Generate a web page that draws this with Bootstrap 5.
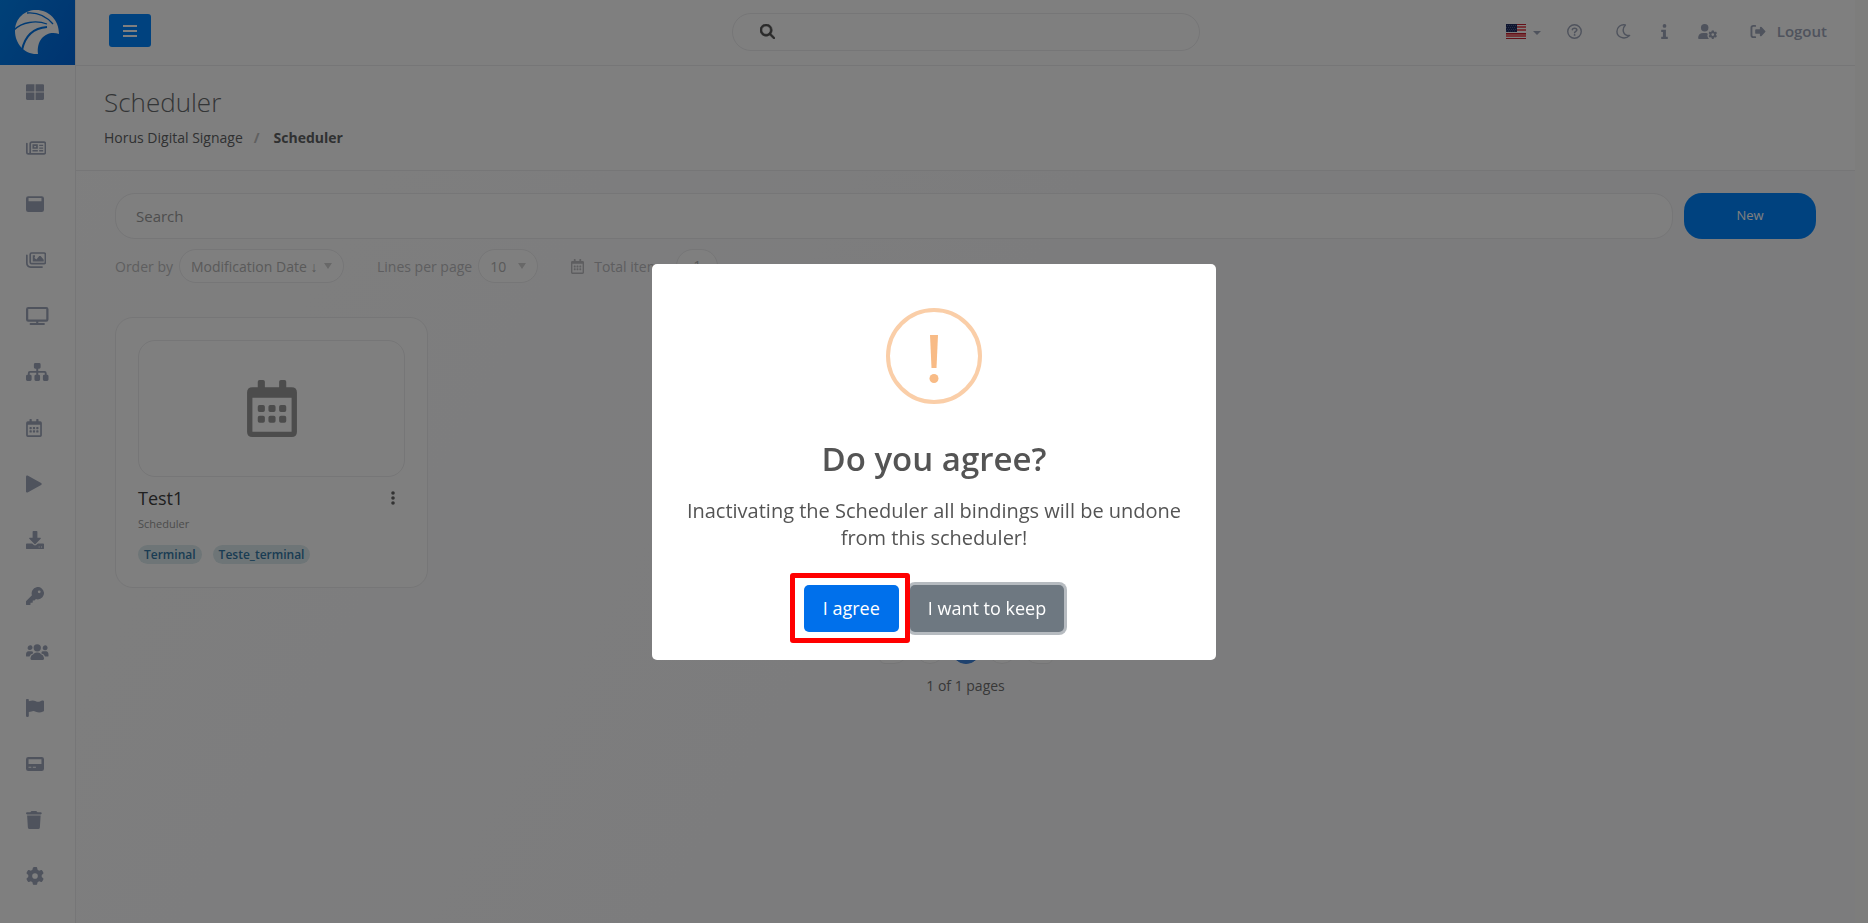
<!DOCTYPE html>
<html lang="en">
<head>
<meta charset="utf-8">
<meta name="viewport" content="width=device-width, initial-scale=1">
<title>Scheduler - Horus Digital Signage</title>
<link rel="stylesheet" href="https://cdn.jsdelivr.net/npm/bootstrap@5.3.0/dist/css/bootstrap.min.css">
<style>
  :root { --line: #ececee; --muted: #9ea6ba; --ink: #707070; --brand: #0085ff; }
  body { font-family: "Open Sans", "Noto Sans", sans-serif; font-size: 14px; background: #fafaf8; color: var(--ink); }
  a { text-decoration: none; color: inherit; }
  svg { fill: currentColor; display: block; flex: none; }
  .shell { background: linear-gradient(120deg, #fefefe, #f9f9fb 50%); margin-right: 13px; }
  .side { width: 76px; background: #fff; border-right: 1px solid var(--line); color: var(--muted); }
  .brand-box { height: 65px; background: linear-gradient(120deg, #0082f0, #0068e0); color: #fff; }
  .side .nav-link { height: 56px; padding: 0 0 2px 26px; display: flex; align-items: center; color: inherit; }
  .side .nav-link svg { height: 18px; }
  .topbar { height: 66px; background: #fff; border-bottom: 1px solid var(--line); color: var(--muted); padding: 0 28px 2px; }
  .topbar > * { flex: 1 1 0; }
  .topbar .find { flex: 0 0 468px; position: relative; }
  .find input { height: 38px; border: 1px solid var(--line); border-radius: 19px; padding-left: 50px; }
  .find svg { position: absolute; left: 28px; top: 11px; color: #555; }
  .menu-btn { background: var(--brand); color: #fff; width: 42px; height: 33px; border-radius: 3px; padding: 0; margin: 0 0 2px 5px; }
  .tools { gap: 26px; font-size: 15px; font-weight: 600; }
  .tools svg { height: 15px; }
  .lang { gap: 7px; }
  .logout { padding-left: 7px; gap: 11px; }
  .heading { background: #fff; border-bottom: 1px solid var(--line); height: 105px; padding: 16px 28px; }
  .heading h1 { font-size: 26px; font-weight: 300; line-height: 40px; margin: 0; color: #676a6c; }
  .crumbs { font-size: 14px; line-height: 20px; margin: 6px 0 0; color: #606264; }
  .crumbs .breadcrumb-item + .breadcrumb-item { padding-left: 11px; }
  .crumbs .breadcrumb-item + .breadcrumb-item::before { padding-right: 14px; color: #c0c0c0; }
  .work { padding: 22px 39px; }
  .search-box { height: 46px; border: 1px solid var(--line); border-radius: 20px; font-size: 15px; padding: 0 20px; }
  .search-box::placeholder { color: #9c9c9c; }
  .new-btn { width: 132px; height: 46px; border-radius: 18px; background: var(--brand); color: #fff; font-size: 13px; }
  .filters { margin-top: 10px; color: #bcbcc0; gap: 33px; }
  .filters > div { gap: 6px; }
  .pill { height: 34px; border: 1px solid var(--line); border-radius: 17px; background-color: #fff; color: #b4b4b4; }
  select.pill { appearance: none; width: 165px; padding: 0 11px; background-repeat: no-repeat; background-position: right 11px center;
    background-image: url("data:image/svg+xml,%3Csvg xmlns='http://www.w3.org/2000/svg' width='8' height='6'%3E%3Cpath fill='%23d0d0d0' d='M0 0h8L4 6z'/%3E%3C/svg%3E"); }
  select.short { width: 60px; }
  .count { width: 42px; line-height: 32px; text-align: center; }
  .tiles { --bs-gutter-x: 34px; margin-top: 34px; }
  .tile { border: 1px solid var(--line); border-radius: 18px; background: #fff; padding: 22px; height: 271px; }
  .thumb { height: 137px; border: 1px solid var(--line); border-radius: 17px; color: #989898; }
  .tile h2 { font-size: 18px; line-height: 24px; font-weight: 500; color: #404040; margin: 0; }
  .tile .kind { font-size: 11px; line-height: 16px; color: #999; margin: 6px 0 13px; }
  .tag { background: #dcebee; color: #3478a6; font-size: 12px; font-weight: 600; line-height: 19px; border-radius: 10px; padding: 0 6px; }
  .dots { color: #666; width: 18px; height: 18px; padding: 0; }
  .tile-head { margin-top: 9px; padding-right: 3px; }
  .pager { gap: 7px; margin: 42px 0 0; }
  .pager .page-link { min-width: 30px; height: 34px; border: 1px solid var(--line); border-radius: 15px; padding: 0 9px; line-height: 32px; text-align: center; color: #999; }
  .pager .active .page-link { background: #3f84dc; border-color: #3f84dc; color: #fff; }
  .page-note { margin-top: 12px; line-height: 20px; }
  .ask { --bs-modal-width: 564px; }
  .ask .modal-content { border: 0; border-radius: 5px; color: #545454; text-align: center; padding: 44px 24px 28px; }
  .warn { width: 96px; height: 96px; margin: 0 auto; }
  .ask h2 { font-size: 33px; line-height: 44px; font-weight: 600; margin: 33px 0 16px; }
  .ask p { font-size: 20px; line-height: 27px; margin: 0 0 34px; }
  .ask .btn { font-size: 18px; height: 47px; padding: 0 19px; border: 0; border-radius: 5px; color: #fff; }
  .yes { background: #0070eb; }
  .keep { background: #6e7881; box-shadow: 0 0 0 3px #b6bbc0; }
  .ask .keep { padding: 0 18px; }
  .marked { position: relative; z-index: 1; }
  .marked::after { content: ""; position: absolute; inset: -12px -11px -11px -14px; border: 5px solid #f00; border-radius: 3px; pointer-events: none; }
</style>
</head>
<body>
<svg width="0" height="0" class="position-absolute" aria-hidden="true">
  <symbol id="gear" viewBox="0 0 512 512"><path d="M495.900 166.600c3.200 8.700 .5 18.400-6.400 24.600l-43.300 39.400c1.100 8.300 1.700 16.800 1.700 25.400s-.6 17.100-1.700 25.400l43.300 39.400c6.900 6.200 9.600 15.900 6.400 24.600c-4.400 11.900-9.700 23.300-15.800 34.300l-4.700 8.100c-6.600 11-14 21.400-22.100 31.200c-5.900 7.200-15.700 9.600-24.500 6.800l-55.700-17.700c-13.400 10.300-28.200 18.900-44 25.400l-12.500 57.100c-2 9.100-9 16.300-18.200 17.800c-13.800 2.300-28 3.500-42.500 3.500s-28.700-1.200-42.500-3.500c-9.200-1.500-16.200-8.700-18.200-17.800l-12.500-57.100c-15.800-6.500-30.600-15.100-44-25.400L83.100 425.900c-8.800 2.800-18.600 .3-24.500-6.800c-8.100-9.800-15.500-20.200-22.100-31.200l-4.700-8.100c-6.100-11-11.400-22.400-15.800-34.300c-3.200-8.700-.5-18.400 6.400-24.600l43.300-39.400C64.600 273.100 64 264.600 64 256s.6-17.100 1.700-25.400L22.400 191.200c-6.900-6.200-9.600-15.900-6.400-24.600c4.400-11.900 9.700-23.300 15.800-34.300l4.700-8.100c6.600-11 14-21.400 22.100-31.200c5.900-7.200 15.700-9.600 24.500-6.800l55.700 17.700c13.400-10.300 28.200-18.900 44-25.400l12.500-57.100c2-9.100 9-16.300 18.200-17.800C227.300 1.200 241.500 0 256 0s28.700 1.200 42.500 3.500c9.200 1.500 16.200 8.700 18.200 17.800l12.500 57.100c15.800 6.500 30.600 15.100 44 25.400l55.700-17.700c8.800-2.800 18.600-.3 24.500 6.800c8.100 9.800 15.500 20.200 22.100 31.200l4.700 8.100c6.100 11 11.400 22.400 15.800 34.300zM256 336a80 80 0 1 0 0-160 80 80 0 1 0 0 160z"/></symbol>
  <symbol id="calendar" viewBox="0 0 448 512"><path fill-rule="evenodd" d="M96 16q0-16 16-16h32q16 0 16 16v48h128V16q0-16 16-16h32q16 0 16 16v48h48q48 0 48 48v352q0 48-48 48H48q-48 0-48-48V112q0-48 48-48h48zM48 160v304h352V160zM96 240q0-16 16-16h32q16 0 16 16v32q0 16-16 16h-32q-16 0-16-16zm96 0q0-16 16-16h32q16 0 16 16v32q0 16-16 16h-32q-16 0-16-16zm96 0q0-16 16-16h32q16 0 16 16v32q0 16-16 16h-32q-16 0-16-16zM96 336q0-16 16-16h32q16 0 16 16v32q0 16-16 16h-32q-16 0-16-16zm96 0q0-16 16-16h32q16 0 16 16v32q0 16-16 16h-32q-16 0-16-16zm96 0q0-16 16-16h32q16 0 16 16v32q0 16-16 16h-32q-16 0-16-16z"/></symbol>
</svg>

<div class="shell d-flex min-vh-100">
  <aside class="side flex-shrink-0">
    <a href="#" class="brand-box d-block" aria-label="Horus">
      <svg width="75" height="65" viewBox="0 0 75 65"><path d="M15 31C15 18 25 10 36 10C49 10 59 20 59 34C48 30 36 38 38 54C25 55 15 44 15 31Z"/><g fill="none" stroke="#0075e8"><path stroke-width="1.300" d="M14 30C22 22 36 20 47 24M27 13C38 12 46 16 53 24"/><path stroke-width="2" d="M22 50C25 36 33 28 47 27"/></g></svg>
    </a>
    <nav class="nav flex-column" aria-label="Main">
      <a class="nav-link" href="#" aria-label="Dashboard"><svg viewBox="0 0 512 512"><path d="M0 64q0-32 32-32h208v208H0zM272 32h208q32 0 32 32v176H272zM0 272h240v208H32q-32 0-32-32zM272 272h240v176q0 32-32 32H272z"/></svg></a>
      <a class="nav-link" href="#" aria-label="News"><svg viewBox="0 0 576 512"><path fill-rule="evenodd" d="M168 64h336q72 0 72 72v240q0 72-72 72H72q-72 0-72-72V128q0-24 24-24t24 24v248q0 24 24 24t24-24V136q0-72 72-72zm-24 312q0 14-4 24h364q24 0 24-24V136q0-24-24-24H168q-24 0-24 24zM184 152h152v128H184zm48 44v40h56v-40zM376 160h112v40H376zM376 240h112v40H376zM184 316h152v40H184zM376 316h112v40H376z"/></svg></a>
      <a class="nav-link" href="#" aria-label="Templates"><svg viewBox="0 0 512 512"><path fill-rule="evenodd" d="M64 32h384q64 0 64 64v320q0 64-64 64H64q-64 0-64-64V96q0-64 64-64zm8 56v88h368V88z"/></svg></a>
      <a class="nav-link" href="#" aria-label="Media"><svg viewBox="0 0 576 512"><path fill-rule="evenodd" d="M160 32h352q64 0 64 64v224q0 64-64 64H160q-64 0-64-64V96q0-64 64-64zm0 48q-16 0-16 16v224q0 16 16 16h352q16 0 16-16V96q0-16-16-16zM24 96q24 0 24 24v224q0 88 88 88h320q24 0 24 24t-24 24H136Q0 480 0 344V120q0-24 24-24zM192 120h64v64h-32l72 56 80-100h40l88 112v44H192z"/></svg></a>
      <a class="nav-link" href="#" aria-label="Terminals"><svg viewBox="0 0 640 512"><path fill-rule="evenodd" d="M64 0h512q64 0 64 64v288q0 64-64 64H350v40h160q28 0 28 28t-28 28H130q-28 0-28-28t28-28h160v-40H64q-64 0-64-64V64Q0 0 64 0zm0 58v300h512V58z"/></svg></a>
      <a class="nav-link" href="#" aria-label="Groups"><svg viewBox="0 0 640 512"><path d="M264 0h112q40 0 40 40v80q0 40-40 40h-28v68h180q60 0 60 60v48h12q40 0 40 40v96q0 40-40 40h-80q-40 0-40-40v-96q0-40 40-40h14v-48q0-10-10-10H348v58h12q40 0 40 40v96q0 40-40 40h-80q-40 0-40-40v-96q0-40 40-40h12v-58H116q-10 0-10 10v48h14q40 0 40 40v96q0 40-40 40H40q-40 0-40-40v-96q0-40 40-40h12v-48q0-60 60-60h180v-68h-28q-40 0-40-40V40q0-40 40-40z"/></svg></a>
      <a class="nav-link" href="#" aria-label="Scheduler"><svg width="16" height="18"><use href="#calendar"/></svg></a>
      <a class="nav-link" href="#" aria-label="Player"><svg viewBox="0 0 448 512"><path d="M0 50Q0 0 45 14l385 215q36 28 0 54L45 498Q0 512 0 462z"/></svg></a>
      <a class="nav-link" href="#" aria-label="Downloads"><svg viewBox="0 0 512 512"><path fill-rule="evenodd" d="M188 24q0-24 24-24h88q24 0 24 24v168h82q28 4 12 28L272 370q-16 14-32 0L94 220q-16-24 12-28h82zM0 376q0-24 24-24h150l50 48q32 24 64 0l50-48h150q24 0 24 24v112q0 24-24 24H24q-24 0-24-24zm360 66v30h28v-30zm68 0v30h28v-30z"/></svg></a>
      <a class="nav-link" href="#" aria-label="Licenses"><svg viewBox="0 0 512 512"><path fill-rule="evenodd" d="M336 352a176 176 0 1 0-167-120L7 395q-7 7-7 17v76q0 24 24 24h80q24 0 24-24v-40h40q24 0 24-24v-40h40q10 0 17-7l33-33q26 8 54 8zM376 96a40 40 0 1 1 0 80 40 40 0 1 1 0-80z"/></svg></a>
      <a class="nav-link" href="#" aria-label="Users"><svg viewBox="0 0 640 512"><path d="M144 64a72 72 0 1 1-96 96 80 80 0 0 1 96-96zM320 32a104 104 0 1 1 0 208 104 104 0 0 1 0-208zM544 64a72 72 0 1 1-60 116 80 80 0 0 1 60-116zM210 320q30-44 90-48h40q60 4 90 48 70 20 82 110v20q0 30-30 30H158q-30 0-30-30v-20q12-90 82-110zM70 232h75q24 0 44 12 2 24 20 44-94 26-110 96H24q-24 0-24-24v-28q0-100 70-100zM495 232h75q70 0 70 100v28q0 24-24 24h-75q-16-70-110-96 18-20 20-44 20-12 44-12z"/></svg></a>
      <a class="nav-link" href="#" aria-label="Campaigns"><svg viewBox="0 0 512 512"><path d="M0 32a32 32 0 0 1 80 0v34l60-16q70-18 140 14 60 30 130 0l45-20q57-16 57 30v250q0 24-24 34-110 50-210 4-60-30-120-10l-78 20v108q0 32-40 32t-40-32z"/></svg></a>
      <a class="nav-link" href="#" aria-label="Devices"><svg viewBox="0 0 512 512"><path fill-rule="evenodd" d="M64 56h384q64 0 64 64v272q0 64-64 64H64q-64 0-64-64V120q0-64 64-64zm8 64v136h368V120zM72 332v32h80v-32zm120 0v32h90v-32z"/></svg></a>
      <a class="nav-link" href="#" aria-label="Trash"><svg viewBox="0 0 448 512"><path d="M135 18q6-18 30-18h118q24 0 30 18l14 14h89q32 0 32 32t-32 32H32Q0 96 0 64t32-32h89zM32 128h384l-21 339q-5 45-48 45H101q-43 0-48-45z"/></svg></a>
      <a class="nav-link" href="#" aria-label="Settings"><svg width="18" height="18"><use href="#gear"/></svg></a>
    </nav>
  </aside>

  <div class="flex-grow-1">
    <header class="topbar d-flex align-items-center">
      <div><button class="btn menu-btn" type="button" aria-label="Toggle menu"><svg class="mx-auto" width="14" height="14" viewBox="0 0 14 14"><path d="M0 1h14v2H0zM0 6h14v2H0zM0 11h14v2H0z"/></svg></button></div>
      <div class="find">
        <svg width="15" height="15" viewBox="0 0 512 512"><path stroke="currentColor" stroke-width="24" d="M416 208c0 46-15 88-40 123l127 126c12 13 12 33 0 46s-33 12-46 0L331 376a208 208 0 1 1 85-168zM208 352a144 144 0 1 0 0-288 144 144 0 1 0 0 288z"/></svg>
        <input class="form-control" type="text" aria-label="Search site">
      </div>
      <div class="tools d-flex align-items-center justify-content-end">
        <a href="#" class="lang d-flex align-items-center" aria-label="Language">
          <svg width="20" height="15" viewBox="0 0 20 15"><path fill="#fff" d="M0 0h20v15H0z"/><path fill="#e8686e" d="M0 0h20v1H0zM0 2h20v2H0zM0 5h20v2H0zM0 9h20v2H0zM0 11h20v2H0z"/><path fill="#c82030" d="M0 0h20v1H0zM0 9h20v1H0zM0 14h20v1H0z"/><path fill="#1e2c60" d="M0 0h11v8H0z"/><path stroke="#8090c0" stroke-dasharray="1 1" stroke-width=".5" d="M1 1.500h10M0 3.500h10M1 5.500h10M0 7h10"/></svg>
          <svg width="8" height="15" viewBox="0 0 8 15"><path d="M0 7h8l-4 4z"/></svg>
        </a>
        <a href="#" aria-label="Help"><svg width="15" viewBox="0 0 16 16"><circle cx="8" cy="8" r="7.200" fill="none" stroke="currentColor" stroke-width="1.500"/><path fill="none" stroke="currentColor" stroke-width="1.600" stroke-linecap="round" d="M5.700 6.200C5.700 3.900 10.500 3.900 10.500 6.400C10.500 7.800 8.100 7.900 8.100 9.300"/><circle cx="8.100" cy="11.600" r="1"/></svg></a>
        <a href="#" class="ps-2" aria-label="Dark mode"><svg width="15" viewBox="0 0 16 16"><path fill="none" stroke="currentColor" stroke-width="1.500" stroke-linejoin="round" d="M10 1C5 0 1 3.500 1 8C1 14 9 17.500 14.500 12.200C8 13 5.500 6 10 1Z"/></svg></a>
        <a href="#" class="px-1" aria-label="Information"><svg width="7" viewBox="0 0 7 16"><circle cx="3.500" cy="2" r="2"/><path d="M0 6h5v7.500h2V16H0v-2.500h1.800v-5H0z"/></svg></a>
        <a href="#" aria-label="User settings"><svg width="19" viewBox="0 0 640 512"><circle cx="224" cy="128" r="128"/><path d="M178 304h92q28 0 50 8-10 20 8 40-30 50 4 96 0 20 16 36l26 28H30q-30 0-30-30Q0 304 178 304z"/><use href="#gear" x="350" y="210" width="300" height="300"/></svg></a>
        <a href="#" class="d-flex align-items-center logout"><svg width="16" viewBox="0 0 512 512"><path d="M160 32q32 0 32 32t-32 32H96q-32 0-32 32v256q0 32 32 32h64q32 0 32 32t-32 32H96q-96 0-96-96V128q0-96 96-96zM504 239q16 17 0 34L378 406q-34 26-58-8v-62H192q-32 0-32-32v-96q0-32 32-32h128v-62q24-34 58-8z"/></svg><span>Logout</span></a>
      </div>
    </header>

    <div class="heading">
      <h1>Scheduler</h1>
      <nav aria-label="breadcrumb"><ol class="breadcrumb crumbs">
        <li class="breadcrumb-item"><a href="#">Horus Digital Signage</a></li>
        <li class="breadcrumb-item fw-bold text-reset" aria-current="page">Scheduler</li>
      </ol></nav>
    </div>

    <main class="work">
      <div class="d-flex" style="gap:11px">
        <input class="form-control search-box" type="text" placeholder="Search" aria-label="Search schedulers">
        <button class="btn new-btn flex-shrink-0" type="button">New</button>
      </div>
      <div class="filters d-flex align-items-center">
        <div class="d-flex align-items-center"><label for="order">Order by</label><select id="order" class="pill"><option>Modification Date ↓</option></select></div>
        <div class="d-flex align-items-center"><label for="lines">Lines per page</label><select id="lines" class="pill short"><option>10</option></select></div>
        <div class="d-flex align-items-center"><svg width="13" height="15"><use href="#calendar"/></svg><span class="mx-1">Total items</span><span class="pill count">1</span></div>
      </div>

      <div class="row row-cols-5 tiles">
        <div class="col">
          <article class="tile">
            <div class="thumb d-flex align-items-center justify-content-center"><svg width="50" height="57"><use href="#calendar"/></svg></div>
            <div class="tile-head d-flex justify-content-between align-items-center">
              <h2>Test1</h2>
              <button class="btn dots" type="button" aria-label="Options"><svg class="mx-auto" width="4" height="14" viewBox="0 0 4 14"><circle cx="2" cy="2" r="1.800"/><circle cx="2" cy="7" r="1.800"/><circle cx="2" cy="12" r="1.800"/></svg></button>
            </div>
            <p class="kind">Scheduler</p>
            <div class="d-flex" style="gap:11px"><span class="tag">Terminal</span><span class="tag">Teste_terminal</span></div>
          </article>
        </div>
      </div>

      <nav aria-label="Pages">
        <ul class="pagination pager justify-content-center">
          <li class="page-item"><a class="page-link" href="#">«</a></li>
          <li class="page-item"><a class="page-link" href="#">‹</a></li>
          <li class="page-item active"><a class="page-link" href="#">1</a></li>
          <li class="page-item"><a class="page-link" href="#">›</a></li>
          <li class="page-item"><a class="page-link" href="#">»</a></li>
        </ul>
        <div class="page-note text-center">1 of 1 pages</div>
      </nav>
    </main>
  </div>
</div>

<div class="modal-backdrop show"></div>
<div class="modal ask show d-block" tabindex="-1" role="dialog" aria-modal="true" aria-labelledby="ask-title">
  <div class="modal-dialog modal-dialog-centered">
    <div class="modal-content">
      <div class="warn"><svg width="96" height="96" viewBox="0 0 96 96"><circle cx="48" cy="48" r="46" fill="none" stroke="#facea8" stroke-width="4"/><path fill="#f8bb86" d="M44 27h8l-1.500 33h-5z"/><circle cx="48" cy="70.500" r="4.500" fill="#f8bb86"/></svg></div>
      <h2 id="ask-title">Do you agree?</h2>
      <p>Inactivating the Scheduler all bindings will be undone from this scheduler!</p>
      <div class="d-flex justify-content-center" style="gap:11px">
        <span class="marked"><button class="btn yes" type="button">I agree</button></span>
        <button class="btn keep" type="button">I want to keep</button>
      </div>
    </div>
  </div>
</div>
<script src="https://cdn.jsdelivr.net/npm/bootstrap@5.3.0/dist/js/bootstrap.bundle.min.js"></script>
</body>
</html>
